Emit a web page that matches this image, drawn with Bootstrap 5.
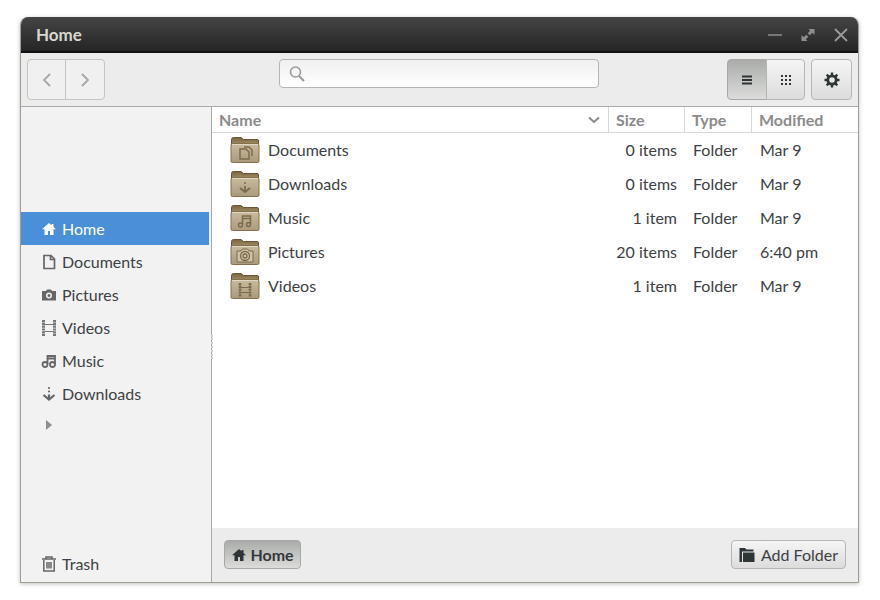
<!DOCTYPE html>
<html lang="en"><head><meta charset="utf-8"><title>Home</title>
<link href="https://cdn.jsdelivr.net/npm/bootstrap@5.3.0/dist/css/bootstrap.min.css" rel="stylesheet">
<style>
html,body{height:100%}
body{background:#fff;font-family:Lato,"Liberation Sans",sans-serif;font-size:16px;color:#3d4144;padding:17px 21px 17px 20px}
.win{height:566px;border:1px solid #a09c90;border-top:0;border-radius:8px 8px 0 0;box-shadow:0 1px 4px rgba(0,0,0,.25);overflow:hidden;background:#fff}
.titlebar{height:36px;flex:none;background:linear-gradient(#454545,#252525);border-bottom:2px solid #111;padding:1px 11px 0 16px;color:#d9d7d0;font-size:17px;font-weight:700;margin:0 -1px}
.winctl{gap:19px}
.toolbar{height:54px;flex:none;background:#ececec;border-bottom:1px solid #aaa;padding:6px 6px 0 6px}
.tbtn.btn{height:41px;padding:0;width:40px;background:linear-gradient(#f5f5f5,#dcdcdc);border:1px solid #b5b5b3;border-radius:4px;display:flex;align-items:center;justify-content:center;--bs-btn-hover-bg:#eee}
.navgrp .tbtn.btn{background:#f0f0f0;border-color:#c4c4c2}
.navgrp .tbtn.btn:first-child{width:39px}
.viewgrp .tbtn.btn:last-child{width:39px}
.tbtn.active-view.btn{background:linear-gradient(#a9aca9,#dcdddb);border-color:#a8a8a6}
.gear.btn{width:41px}
.viewgrp{margin-right:6px}
.searchbox{width:320px;height:29px;margin-left:174px;background:linear-gradient(#f0f0f0,#fff);border:1px solid #b5b5b3;border-radius:4px;padding-left:8px}
.searchbox input{border:0;background:transparent;outline:0;flex:1;min-width:0}
.mainarea,.rightpane{min-height:0;min-width:0}
.sidebar{width:191px;flex:none;background:#f2f2f2;border-right:1px solid #a8a8a4;color:#3d4144;padding-top:105px;position:relative}
.sideitem{height:33px;width:188px;padding-left:20px;gap:5px;border:0;background:transparent;color:#3d4144}
.sideitem.selected{background:#4a90d9;color:#fff}
.sideitem svg{flex:none;width:16px;height:16px}
.expander{height:30px;padding-left:24px}
.trashitem{margin-bottom:2px}
.grip{position:absolute;right:-2px;top:228px;height:24px;border-right:2px dotted #cfcfcf}
.colhead{height:26px;flex:none;border-bottom:1px solid #d8d8d8;color:#8b8b8b;font-weight:700}
.colhead>div{padding-left:7px;height:100%;display:flex;align-items:center}
.colhead>div+div{border-left:1px solid #d8d8d8}
.c-name{width:396px;flex:none}.c-size{width:76px;flex:none}.c-type{width:67px;flex:none}.c-mod{flex:1}
.frow{height:34px}
.frow .c-name{padding-left:18px;gap:8px;display:flex;align-items:center}
.frow .c-size{text-align:right;padding-right:7px}
.frow .c-type{padding-left:9px}
.frow .c-mod{padding-left:9px}
.filelist{flex:1;background:#fff}
.statusbar{height:54px;flex:none;background:#ececec;padding:12px 12px 0 12px}
.pathbtn.btn{height:29px;width:77px;padding:0;background:linear-gradient(#a9aca9,#dcdddb);border:1px solid #a8a8a6;border-radius:4px;font-size:16px;font-weight:700;color:#33373a;gap:3px}
.addbtn.btn{height:29px;width:115px;padding:0;background:linear-gradient(#f5f5f5,#dcdcdc);border:1px solid #b5b5b3;border-radius:4px;font-size:16px;color:#3d4144;gap:6px}
.glyph{fill:none;stroke:#7b6a4b}
</style></head>
<body>
<svg width="0" height="0" class="d-block" aria-hidden="true"><defs>
<linearGradient id="fg" x1="0" y1="0" x2="0" y2="1"><stop offset="0" stop-color="#c9bb9f"/><stop offset="1" stop-color="#ab9a7c"/></linearGradient>
<linearGradient id="bk" x1="0" y1="0" x2="0" y2="1"><stop offset="0" stop-color="#7a6541"/><stop offset="1" stop-color="#a8956f"/></linearGradient>
<symbol id="folder" viewBox="0 0 30 28"><path d="M1.500 3.500Q1.500 1.500 3.500 1.500H11L13.500 3.500H27.500Q28.500 3.500 28.500 5V10H1.500Z" fill="url(#bk)" stroke="#6b5736"/><path d="M1 9.500Q1 7.500 3 7.500H27Q29 7.500 29 9.500V25Q29 26.500 27.500 26.500H2.500Q1 26.500 1 25Z" fill="url(#fg)" stroke="#84704b"/><path d="M2 8.500H28" stroke="#e0d7c5"/></symbol>
<symbol id="home" viewBox="0 0 16 16"><path d="M8 2 1 8.300H3.500V14H7V10H9V14H12.500V8.300H15L12.500 6V3H10.500V4.200Z" fill="currentColor"/></symbol>
</defs></svg>
<div class="win d-flex flex-column">
  <div class="titlebar d-flex align-items-center justify-content-between"><span>Home</span>
    <div class="winctl d-flex align-items-center">
      <svg width="14" height="14" viewBox="0 0 14 14"><path d="M0 7h14" stroke="#8e8e8e" stroke-width="1.600"/></svg>
      <svg width="14" height="14" viewBox="0 0 14 14" fill="#8e8e8e"><path d="M7.500 1H13.500V7L11.300 4.800 8.800 7.300 6.700 5.200 9.200 2.700ZM6.500 13H.5V7L2.700 9.200 5.200 6.700 7.300 8.800 4.800 11.300Z"/></svg>
      <svg width="14" height="14" viewBox="0 0 14 14"><path d="M1 1 13 13M13 1 1 13" stroke="#9a9a9a" stroke-width="1.800"/></svg>
    </div>
  </div>
  <div class="toolbar d-flex align-items-start">
    <div class="btn-group navgrp">
      <button class="btn tbtn" type="button" aria-label="Back"><svg width="12" height="16" viewBox="0 0 12 16"><path d="M9 2 3 8l6 6" fill="none" stroke="#a6a6a6" stroke-width="1.800"/></svg></button>
      <button class="btn tbtn" type="button" aria-label="Forward"><svg width="12" height="16" viewBox="0 0 12 16"><path d="M3 2l6 6-6 6" fill="none" stroke="#a6a6a6" stroke-width="1.800"/></svg></button>
    </div>
    <div class="searchbox d-flex align-items-center"><svg width="18" height="18" viewBox="0 0 18 18" class="flex-shrink-0"><circle cx="7.500" cy="7" r="5" fill="none" stroke="#9c9c9c" stroke-width="1.600"/><path d="M11 11l5 5" stroke="#9c9c9c" stroke-width="2.200"/></svg><input type="text" aria-label="Search"></div>
    <div class="btn-group ms-auto viewgrp">
      <button class="btn tbtn active-view" type="button" aria-label="List"><svg width="12" height="12" viewBox="0 0 12 12" fill="#2f3436"><path d="M1 1.500h10v2H1zM1 5h10v2H1zM1 8.500h10v2H1z"/></svg></button>
      <button class="btn tbtn" type="button" aria-label="Grid"><svg width="12" height="12" viewBox="0 0 12 12" fill="#2f3436"><path d="M1 1h2v2H1zM5 1h2v2H5zM9 1h2v2H9zM1 5h2v2H1zM5 5h2v2H5zM9 5h2v2H9zM1 9h2v2H1zM5 9h2v2H5zM9 9h2v2H9z"/></svg></button>
    </div>
    <button class="btn tbtn gear" type="button" aria-label="Settings"><svg width="16" height="16" viewBox="0 0 16 16"><circle cx="8" cy="8" r="4.200" fill="none" stroke="#2f3436" stroke-width="2.800"/><path d="M8 .5v15M.5 8h15M2.700 2.700l10.600 10.600M13.300 2.700 2.700 13.300" stroke="#2f3436" stroke-width="2.400" stroke-dasharray="3 9 3"/></svg></button>
  </div>
  <div class="mainarea d-flex flex-grow-1">
    <div class="sidebar d-flex flex-column">
      <div class="grip"></div>
      <div class="sideitem selected d-flex align-items-center"><svg color="#fff"><use href="#home"/></svg>Home</div>
      <div class="sideitem d-flex align-items-center"><svg viewBox="0 0 16 16"><path d="M3 1.500H10L13.500 5V14.500H3ZM9.500 1.500V5.500H13.500" fill="none" stroke="#666" stroke-width="1.700"/></svg>Documents</div>
      <div class="sideitem d-flex align-items-center"><svg viewBox="0 0 16 16"><path fill-rule="evenodd" d="M1 4H5L6 2.500H10L11 4H15V13.500H1ZM8 5.500A3 3 0 1 0 8 11.500 3 3 0 0 0 8 5.500ZM8 7A1.500 1.500 0 1 1 8 10 1.500 1.500 0 0 1 8 7Z" fill="#666"/></svg>Pictures</div>
      <div class="sideitem d-flex align-items-center"><svg viewBox="0 0 16 16"><path d="M2.500 0V16M13.500 0V16" fill="none" stroke="#777" stroke-width="3" stroke-dasharray="2.200 .6"/><path d="M4 4.500H12M4 11.500H12" stroke="#777" stroke-width="1.200"/></svg>Videos</div>
      <div class="sideitem d-flex align-items-center"><svg viewBox="0 0 16 16"><path d="M6.500 11V3H14V11M6.500 5.500H14" fill="none" stroke="#666" stroke-width="1.800"/><circle cx="4" cy="11.500" r="2.500" fill="none" stroke="#666" stroke-width="1.800"/><circle cx="11.500" cy="11.500" r="2.500" fill="none" stroke="#666" stroke-width="1.800"/></svg>Music</div>
      <div class="sideitem d-flex align-items-center"><svg viewBox="0 0 16 16"><path d="M2.500 9 8 13.500 13.500 9" fill="none" stroke="#666" stroke-width="2.200"/><path d="M8 8.500v4.500" stroke="#666" stroke-width="2.200"/><circle cx="8" cy="5.500" r="1.100" fill="#666"/><circle cx="8" cy="2" r="1.100" fill="#666"/></svg>Downloads</div>
      <div class="expander d-flex align-items-center"><svg width="8" height="12" viewBox="0 0 8 12"><path d="M1 1 7 6 1 11Z" fill="#8e8e8e"/></svg></div>
      <div class="sideitem trashitem d-flex align-items-center mt-auto"><svg viewBox="0 0 16 16"><path d="M1 3H15M5 3V1H11V3" fill="none" stroke="#666" stroke-width="1.600"/><path d="M2.800 4V15H13.200V4M6 6V12.500M8 6V12.500M10 6V12.500" fill="none" stroke="#666" stroke-width="1.500"/></svg>Trash</div>
    </div>
    <div class="rightpane d-flex flex-column flex-grow-1">
      <div class="colhead d-flex">
        <div class="c-name justify-content-between">Name<svg class="me-2" width="12" height="8" viewBox="0 0 12 8"><path d="M1 1.500 6 6l5-4.500" fill="none" stroke="#8b8b8b" stroke-width="2"/></svg></div>
        <div class="c-size">Size</div><div class="c-type">Type</div><div class="c-mod">Modified</div>
      </div>
      <div class="filelist">
        <div class="frow d-flex align-items-center"><div class="c-name"><svg width="30" height="28"><use href="#folder"/><path class="glyph" stroke-width="1.500" d="M10 13h6l3 3v7h-9z M14 11h5l3 3v6"/></svg>Documents</div><div class="c-size">0 items</div><div class="c-type">Folder</div><div class="c-mod">Mar 9</div></div>
        <div class="frow d-flex align-items-center"><div class="c-name"><svg width="30" height="28"><use href="#folder"/><path class="glyph" stroke-width="1.800" d="M10 18l5 4 5-4M15 16v5"/><circle cx="15" cy="13" r="1" fill="#7b6a4b"/></svg>Downloads</div><div class="c-size">0 items</div><div class="c-type">Folder</div><div class="c-mod">Mar 9</div></div>
        <div class="frow d-flex align-items-center"><div class="c-name"><svg width="30" height="28"><use href="#folder"/><path class="glyph" stroke-width="1.500" d="M12.500 20v-8h8v8M12.500 14.500h8"/><circle class="glyph" cx="10.500" cy="21" r="2" stroke-width="1.500"/><circle class="glyph" cx="18.500" cy="20.500" r="2" stroke-width="1.500"/></svg>Music</div><div class="c-size">1 item</div><div class="c-type">Folder</div><div class="c-mod">Mar 9</div></div>
        <div class="frow d-flex align-items-center"><div class="c-name"><svg width="30" height="28"><use href="#folder"/><path d="M7 13h4l1.500-2h5l1.500 2h4v11H7z" fill="#cfc2a8" stroke="#7b6a4b"/><circle class="glyph" cx="15" cy="18" r="4.500" stroke-width="1.300"/><circle class="glyph" cx="15" cy="18" r="2" stroke-width="1.300"/></svg>Pictures</div><div class="c-size">20 items</div><div class="c-type">Folder</div><div class="c-mod">6:40 pm</div></div>
        <div class="frow d-flex align-items-center"><div class="c-name"><svg width="30" height="28"><use href="#folder"/><path class="glyph" stroke-width="2.600" stroke-dasharray="2.200 .6" d="M10 11v14M20 11v14"/><path class="glyph" stroke-width="1.200" d="M11 15.500h8M11 20.500h8"/></svg>Videos</div><div class="c-size">1 item</div><div class="c-type">Folder</div><div class="c-mod">Mar 9</div></div>
      </div>
      <div class="statusbar d-flex align-items-start justify-content-between">
        <button class="btn pathbtn d-flex align-items-center justify-content-center" type="button"><svg width="16" height="16" color="#2f3436"><use href="#home"/></svg>Home</button>
        <button class="btn addbtn d-flex align-items-center justify-content-center" type="button"><svg width="16" height="16" viewBox="0 0 16 16"><path d="M0.500 1H6L7.500 2.500H14.500V4.500H3V15H0.500ZM4 5.500H15.500V15H4Z" fill="#2f3436"/></svg>Add Folder</button>
      </div>
    </div>
  </div>
</div>
</body></html>
